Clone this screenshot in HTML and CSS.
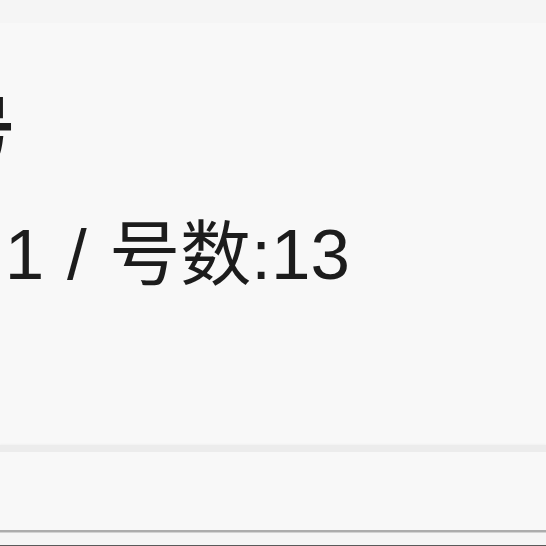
FILE: index.html
```html
<!DOCTYPE html>
<html lang="zh-CN">
<head>
<meta charset="utf-8">
<title>期刊信息</title>
<link rel="stylesheet" href="styles.css">
</head>
<body>
<div class="page">
  <div class="status-strip"></div>
  <section class="issue">
    <h1 class="issue-title">期刊号</h1>
    <p class="issue-meta">2021.1 / 号数:13</p>
  </section>
  <div class="section-gap"></div>
  <div class="blank-area"></div>
  <div class="tab-rule"></div>
  <div class="tab-bar"></div>
  <div class="screen-edge"></div>
</div>
</body>
</html>
```
FILE: styles.css
```css
html, body {
  margin: 0;
  padding: 0;
  background: #f8f8f8;
}

.page {
  width: 546px;
  height: 546px;
  display: flex;
  flex-direction: column;
  overflow: hidden;
  background: #f8f8f8;
  font-family: "Liberation Sans", "Noto Sans CJK SC", sans-serif;
  color: #1c1c1c;
}

.status-strip {
  height: 23px;
  flex: none;
  background: #f5f5f5;
}

.issue {
  flex: none;
  height: 422px;
  padding-top: 60px;
  box-sizing: border-box;
  margin-left: -195px;
}

.issue-title {
  margin: 0;
  font-family: "Noto Sans CJK SC", sans-serif;
  font-size: 70px;
  font-weight: 700;
  line-height: 84px;
  white-space: nowrap;
}

.issue-meta {
  margin: 46px 0 0 22px;
  font-size: 71px;
  line-height: 84px;
  font-weight: 400;
  white-space: nowrap;
  word-spacing: 3px;
}

.section-gap {
  flex: none;
  height: 7px;
  background: #ececec;
  box-shadow: 0 -1px 2px rgba(0, 0, 0, 0.03);
}

.blank-area {
  flex: 1;
  background: #f8f8f8;
}

.tab-rule {
  flex: none;
  height: 2px;
  background: #acacac;
  border-bottom: 1px solid #d2d2d2;
}

.tab-bar {
  flex: none;
  height: 12px;
  background: #f5f5f5;
}

.screen-edge {
  flex: none;
  height: 1px;
  background: #5a5a5a;
}
```
